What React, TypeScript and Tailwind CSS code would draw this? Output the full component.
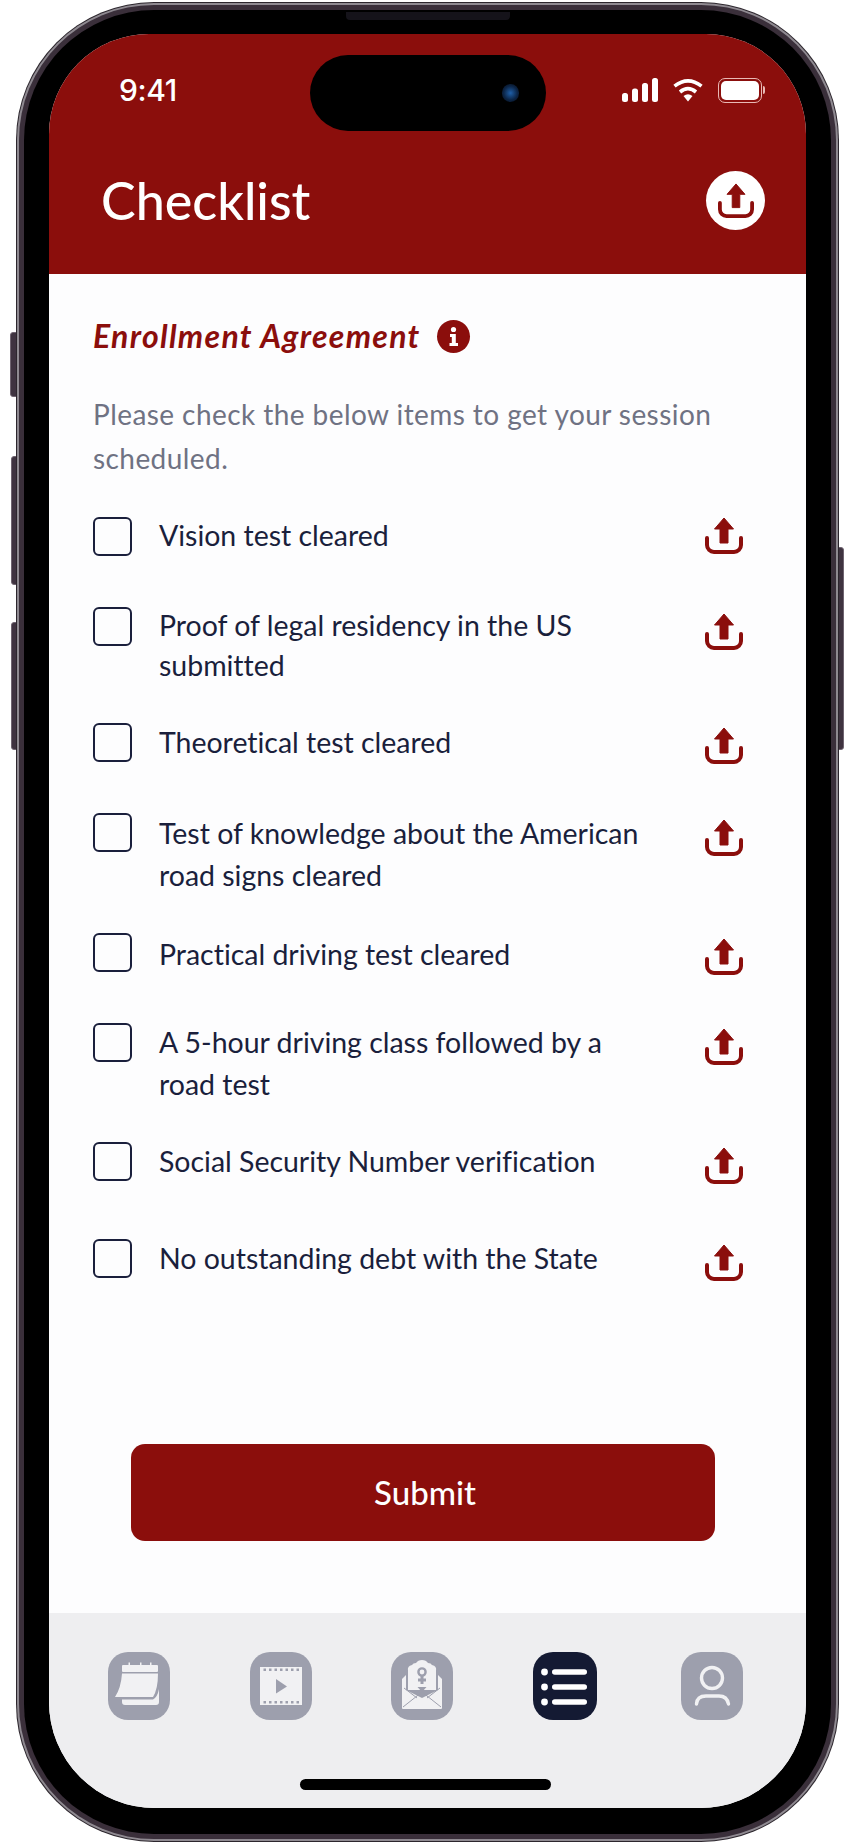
const items = [
  { text: ["Vision test cleared"], row: "h-[90px]", icon: "mt-0", cls: "-mt-[2px] leading-[41px]" },
  { text: ["Proof of legal residency in the US", "submitted"], row: "h-[116px]", icon: "mt-[6px]", cls: "-mt-[2px] leading-[40px]" },
  { text: ["Theoretical test cleared"], row: "h-[90px]", icon: "mt-[4px]", cls: "-mt-[1px] leading-[41px]" },
  { text: ["Test of knowledge about the American", "road signs cleared"], row: "h-[120px]", icon: "mt-[6px]", cls: "-mt-[1px] leading-[42px]" },
  { text: ["Practical driving test cleared"], row: "h-[90px]", icon: "mt-[5px]", cls: "mt-[1px] leading-[41px]" },
  { text: ["A 5-hour driving class followed by a", "road test"], row: "h-[119px]", icon: "mt-[5px]", cls: "-mt-[2px] leading-[42px]" },
  { text: ["Social Security Number verification"], row: "h-[97px]", icon: "mt-[5px]", cls: "-mt-[1px] leading-[41px]" },
  { text: ["No outstanding debt with the State"], row: "h-[39px]", icon: "mt-[5px]", cls: "-mt-[1px] leading-[41px]" },
];

function UploadIcon({ className }: { className: string }) {
  return (
    <svg viewBox="0 0 38 37" className={className} fill="none">
      <path d="M19 1 L28.5 12 H23 V26 H15 V12 H9.5 Z" fill="currentColor" stroke="currentColor" strokeWidth="1" strokeLinejoin="round" />
      <path d="M2 21 V28 a7 7 0 0 0 7 7 H29 a7 7 0 0 0 7 -7 V21" stroke="currentColor" strokeWidth="4" strokeLinecap="round" />
    </svg>
  );
}

function CalendarIcon() {
  return (
    <svg viewBox="0 0 62 68" className="w-[62px] h-[68px]" fill="#f1f1f3">
      <rect x="14" y="13" width="36" height="7" rx="1" />
      <rect x="20.5" y="10.5" width="1.5" height="4" />
      <rect x="32" y="10.5" width="1.5" height="4" />
      <rect x="42" y="10.5" width="1.5" height="4" />
      <path d="M14 21.5 H50 Q50 37 45 45 H7 Q13 36 14 21.5 Z" />
      <path d="M51 37 V50 a3 3 0 0 1 -3 3 H17 a3 3 0 0 1 -3 -3 V47.5 H45 Q49.5 45 51 37 Z" />
    </svg>
  );
}

function FilmIcon() {
  const holes = [13.5, 19, 24.5, 30, 35.5, 41, 46.5];
  return (
    <svg viewBox="0 0 62 68" className="w-[62px] h-[68px]">
      <rect x="10" y="15" width="42" height="38" fill="#f1f1f3" />
      {holes.map((x) => (
        <g key={x} fill="#9d9fad">
          <rect x={x} y="16.5" width="2.5" height="2.5" />
          <rect x={x} y="49" width="2.5" height="2.5" />
        </g>
      ))}
      <path d="M26 27 L37 34.5 L26 41.5 Z" fill="#9d9fad" />
    </svg>
  );
}

function MailIcon() {
  return (
    <svg viewBox="0 0 62 68" className="w-[62px] h-[68px]">
      <path d="M17 38 V19 Q16 14 21 13 Q22 11 25 11 Q27 8 31 8 Q35 8 37 11 Q40 11 41 13 Q46 14 45 19 V38 Z" fill="#f1f1f3" />
      <path d="M11 27 L15 23 V38 L31 46 L47 38 V23 L51 27 V56 a1 1 0 0 1 -1 1 H12 a1 1 0 0 1 -1 -1 Z" fill="#f1f1f3" />
      <path d="M12 55 L31 40 L50 55" fill="none" stroke="#9d9fad" strokeWidth="1" />
      <path d="M13 36 L26 46 M49 36 L36 46" fill="none" stroke="#9d9fad" strokeWidth="1" />
      <circle cx="31" cy="20" r="3.6" fill="none" stroke="#9d9fad" strokeWidth="2.4" />
      <path d="M31 24 V32 M27 28 H35" stroke="#9d9fad" strokeWidth="3" />
      <path d="M26.5 35 H35.5 L31 40 Z" fill="#9d9fad" />
    </svg>
  );
}

function ListIcon() {
  return (
    <svg viewBox="0 0 64 68" className="w-[64px] h-[68px]" fill="#ffffff">
      <circle cx="11.5" cy="20" r="3.4" />
      <circle cx="11.5" cy="35" r="3.4" />
      <circle cx="11.5" cy="50" r="3.4" />
      <rect x="19" y="17.2" width="35" height="5.6" rx="2.8" />
      <rect x="19" y="32.2" width="35" height="5.6" rx="2.8" />
      <rect x="19" y="47.2" width="35" height="5.6" rx="2.8" />
    </svg>
  );
}

function UserIcon() {
  return (
    <svg viewBox="0 0 62 68" className="w-[62px] h-[68px]" fill="none" stroke="#f1f1f3" strokeWidth="3.4" strokeLinecap="round">
      <circle cx="31" cy="26" r="10.5" />
      <path d="M15.5 52 Q16 44 25 44 H38 Q46 44 47.5 52" />
    </svg>
  );
}

const tabs = [
  { icon: <CalendarIcon />, cls: "ml-0 w-[62px] bg-[#9d9fad]" },
  { icon: <FilmIcon />, cls: "ml-[80px] w-[62px] bg-[#9d9fad]" },
  { icon: <MailIcon />, cls: "ml-[79px] w-[62px] bg-[#9d9fad]" },
  { icon: <ListIcon />, cls: "ml-[80px] w-[64px] bg-[#141a33]" },
  { icon: <UserIcon />, cls: "ml-[84px] w-[62px] bg-[#9d9fad]" },
];

export default function App() {
  return (
    <div className="relative w-[853px] h-[1844px] bg-white overflow-hidden font-['Lato',sans-serif]">
      {/* side buttons */}
      <div className="absolute left-[10px] top-[332px] w-[9px] h-[65px] rounded-l-[3px] bg-[#3f3340] border border-[#6f6470]" />
      <div className="absolute left-[11px] top-[456px] w-[8px] h-[129px] rounded-l-[3px] bg-[#3f3340] border border-[#6f6470]" />
      <div className="absolute left-[11px] top-[622px] w-[8px] h-[128px] rounded-l-[3px] bg-[#3f3340] border border-[#6f6470]" />
      <div className="absolute left-[836px] top-[547px] w-[8px] h-[203px] rounded-r-[3px] bg-[#3f3340] border border-[#6f6470]" />

      {/* phone body */}
      <div className="relative ml-[16px] mt-[2px] w-[823px] h-[1840px] rounded-[138px] bg-[#2c262d] p-[1px]">
        <div className="w-full h-full rounded-[137px] bg-[#8f8a91] p-[2px]">
          <div className="w-full h-full rounded-[135px] bg-[#3a2f3a] p-[5px]">
            <div className="w-full h-full rounded-[130px] bg-black pl-[25px] pt-[24px]">
              {/* screen */}
              <div className="relative w-[757px] h-[1774px] rounded-t-[100px] rounded-b-[106px] overflow-hidden flex flex-col bg-[#fdfdfe]">
                <div className="h-[240px] bg-[#8b0e0c] text-white shrink-0">
                  <div className="flex items-center h-[24px] mt-[44px] pl-[70px] pr-[41px]">
                    <span className="text-[30px] font-['Inter',sans-serif] font-medium tracking-[-0.4px] leading-[24px] -mt-[1px]">9:41</span>
                    <div className="ml-auto flex items-center">
                      <svg viewBox="0 0 36 24" className="w-[36px] h-[24px]" fill="#fff">
                        <rect x="0" y="15" width="6" height="9" rx="2.5" />
                        <rect x="10" y="10.5" width="6" height="13.5" rx="2.5" />
                        <rect x="20" y="5" width="6" height="19" rx="2.5" />
                        <rect x="30" y="0" width="6" height="24" rx="2.5" />
                      </svg>
                      <svg viewBox="0 0 30 24" className="ml-[15px] w-[30px] h-[24px]" fill="none" stroke="#fff" strokeWidth="3.6">
                        <path d="M1.5 8.2 Q15 -2.6 28.5 8.2" />
                        <path d="M7 14 Q15 7.4 23 14" />
                        <path d="M10.5 18 L15 23.4 L19.5 18 Q15 14.6 10.5 18 Z" fill="#fff" stroke="none" />
                      </svg>
                      <div className="ml-[15px] w-[44px] h-[25px] rounded-[7px] border border-[#e9b9b5] p-[2px]">
                        <div className="w-full h-full rounded-[5px] bg-white" />
                      </div>
                      <div className="ml-[1px] w-[2px] h-[8px] rounded-r-[2px] bg-[#e9b9b5]" />
                    </div>
                  </div>
                  <div className="flex items-center justify-between h-[60px] mt-[68px] pl-[52px] pr-[41px]">
                    <span className="text-[52px] font-medium leading-[60px]">Checklist</span>
                    <div className="w-[59px] h-[59px] rounded-full bg-white flex items-center justify-center">
                      <UploadIcon className="w-[36px] h-[35px] text-[#8b0e0c]" />
                    </div>
                  </div>
                </div>

                <div className="flex-1 px-[44px] pt-[45px]">
                  <div className="flex items-center h-[34px]">
                    <span className="text-[32px] font-bold italic tracking-[1.3px] text-[#8b0e0c] leading-[34px]">Enrollment Agreement</span>
                    <span className="ml-[16px] w-[33px] h-[33px] rounded-full bg-[#8b0e0c] flex items-center justify-center">
                      <svg viewBox="0 0 33 33" className="w-[33px] h-[33px]" fill="#fff">
                        <circle cx="16.5" cy="9.5" r="2.6" />
                        <path d="M13 14 H18.8 V23 H21 V26 H12.5 V23 H14.8 V17 H13 Z" />
                      </svg>
                    </span>
                  </div>
                  <p className="mt-[39px] text-[28px] tracking-[0.43px] leading-[44px] text-[#6f7283]">
                    Please check the below items to get your session
                    <br />
                    scheduled.
                  </p>
                  <div className="mt-[37px]">
                    {items.map((item) => (
                      <div key={item.text[0]} className={`flex items-start ${item.row}`}>
                        <div className="w-[39px] h-[39px] shrink-0 rounded-[6px] border-2 border-[#1a1f3c]" />
                        <div className={`ml-[27px] flex-1 text-[28.5px] tracking-[-0.02px] text-[#1a1f3c] ${item.cls}`}>
                          {item.text.map((line) => (
                            <div key={line}>{line}</div>
                          ))}
                        </div>
                        <div className={`shrink-0 mr-[19px] ${item.icon}`}>
                          <UploadIcon className="w-[38px] h-[37px] text-[#8b0e0c]" />
                        </div>
                      </div>
                    ))}
                  </div>
                  <button className="mt-[166px] ml-[38px] w-[584px] h-[97px] pl-[4px] rounded-[14px] bg-[#8b0e0c] text-white text-[33px] font-medium">
                    Submit
                  </button>
                </div>

                <div className="h-[195px] shrink-0 bg-[#eeeef0] pt-[39px]">
                  <div className="flex pl-[59px]">
                    {tabs.map((tab, i) => (
                      <div key={i} className={`h-[68px] rounded-[20px] overflow-hidden ${tab.cls}`}>
                        {tab.icon}
                      </div>
                    ))}
                  </div>
                  <div className="mt-[59px] ml-[251px] w-[251px] h-[11px] rounded-full bg-black" />
                </div>

                {/* dynamic island */}
                <div className="absolute left-[261px] top-[21px] w-[236px] h-[76px] rounded-[38px] bg-black">
                  <div className="absolute left-[192px] top-[29px] w-[17px] h-[18px] rounded-full bg-[radial-gradient(circle,#1f5fa8_0%,#0c2547_55%,#05080f_100%)]" />
                </div>
              </div>
            </div>
          </div>
        </div>
        {/* speaker slit */}
        <div className="absolute left-[330px] top-[10px] w-[164px] h-[8px] rounded-b-[4px] bg-[#15131a]" />
      </div>
    </div>
  );
}
